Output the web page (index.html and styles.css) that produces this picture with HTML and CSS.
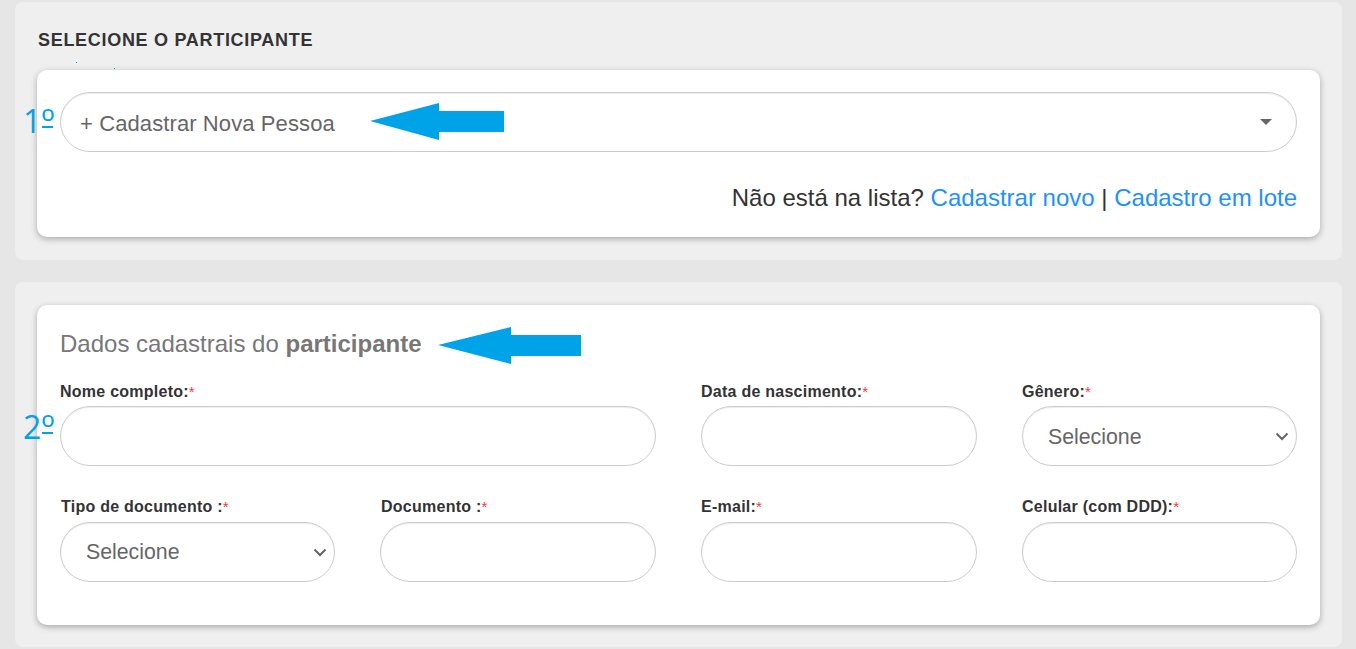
FILE: index.html
```html
<!DOCTYPE html>
<html lang="pt-BR">
<head>
<meta charset="utf-8">
<title>Participante</title>
<link rel="stylesheet" href="styles.css">
</head>
<body>
<main class="page">
  <section class="panel panel-select">
    <h2 class="panel-title">SELECIONE O PARTICIPANTE</h2>
    <div class="card card-select">
      <div class="combo">
        <span class="combo-text">+ Cadastrar Nova Pessoa</span>
        <span class="combo-caret"></span>
      </div>
      <p class="links">Não está na lista? <a href="#">Cadastrar novo</a> | <a href="#">Cadastro em lote</a></p>
    </div>
  </section>

  <section class="panel panel-form">
    <div class="card card-form">
      <h3 class="form-title">Dados cadastrais do <strong>participante</strong></h3>
      <form class="grid">
        <div class="field span2"><label>Nome completo:<em>*</em></label><input type="text"></div>
        <div class="field"><label>Data de nascimento:<em>*</em></label><input type="text"></div>
        <div class="field"><label>Gênero:<em>*</em></label><select class="low-text"><option>Selecione</option></select></div>
        <div class="field lower inset"><label>Tipo de documento :<em>*</em></label><select><option>Selecione</option></select></div>
        <div class="field lower inset"><label>Documento :<em>*</em></label><input type="text"></div>
        <div class="field lower"><label>E-mail:<em>*</em></label><input type="text"></div>
        <div class="field lower"><label>Celular (com DDD):<em>*</em></label><input type="text"></div>
      </form>
    </div>
  </section>
</main>

<span class="step step-1">1<span class="ord">º</span></span>
<span class="step step-2">2<span class="ord">º</span></span>
<span class="speck speck-1"></span>
<span class="speck speck-2"></span>
<svg class="arrow arrow-1" width="136" height="40" viewBox="0 0 136 40"><path d="M1 19 L70 1 L70 9 L135 9 L135 30 L70 30 L70 38 Z"/></svg>
<svg class="arrow arrow-2" width="146" height="40" viewBox="0 0 146 40"><path d="M1 19 L74 1 L74 9 L144 9 L144 30 L74 30 L74 38 Z"/></svg>
</body>
</html>
```
FILE: styles.css
```css
* { box-sizing: border-box; }
html, body { margin: 0; height: 649px; overflow: hidden; }
body {
  background: #e6e6e6;
  font-family: "Liberation Sans", Arial, sans-serif;
  color: #333;
  position: relative;
}
.page {
  display: flex;
  flex-direction: column;
  gap: 22px;
  padding: 2px 14px 0 15px;
}
.panel {
  background: #efefef;
  border-radius: 8px;
  padding: 0 22px;
}
.panel-select { height: 258px; padding-top: 29px; }
.panel-form { height: 365px; padding-top: 23px; }
.panel-title {
  margin: 0 0 20px 1px;
  font-size: 18px;
  line-height: 19px;
  font-weight: 700;
  letter-spacing: .7px;
  color: #333;
}
.card {
  background: #fff;
  border-radius: 10px;
  box-shadow: 0 2px 6px rgba(0,0,0,.3);
  padding: 23px;
}
.card-select { height: 167px; padding-top: 22px; }
.card-form { height: 320px; padding-top: 24px; }
.combo {
  height: 60px;
  border: 1px solid #ccc;
  border-radius: 30px;
  box-shadow: inset 0 1px 1px rgba(0,0,0,.075);
  display: flex;
  align-items: center;
  justify-content: space-between;
  padding: 0 24px 0 19px;
  color: #666;
  font-size: 22px;
}
.combo-text { letter-spacing: .1px; padding-top: 3px; }
.combo-caret {
  width: 0; height: 0;
  border-left: 6px solid transparent;
  border-right: 6px solid transparent;
  border-top: 6px solid #666;
}
.links {
  margin: 31px 0 0;
  text-align: right;
  font-size: 24px;
  line-height: 30px;
}
.links a { color: #1e90ff; text-decoration: none; }
.form-title {
  margin: 0 0 24px;
  font-size: 24px;
  line-height: 30px;
  font-weight: 400;
  color: #777;
}
.form-title strong { font-weight: 700; }
.grid {
  display: grid;
  grid-template-columns: 275px 276px 276px 275px;
  column-gap: 45px;
  row-gap: 32px;
}
.span2 { grid-column: span 2; }
.field label {
  display: block;
  height: 19px;
  margin-bottom: 4px;
  font-size: 16px;
  line-height: 17px;
  font-weight: 700;
  letter-spacing: .25px;
  color: #333;
}
.lower label { margin-bottom: 5px; }
.inset label { padding-left: 1px; }
.field em { color: #f33; font-style: normal; font-weight: 400; font-size: 15px; }
.field input, .field select {
  display: block;
  width: 100%;
  height: 60px;
  border: 1px solid #ccc;
  border-radius: 30px;
  background-color: #fff;
  box-shadow: inset 0 1px 1px rgba(0,0,0,.075);
  font-family: "Liberation Sans", Arial, sans-serif;
  font-size: 21.3px;
  color: #666;
  padding: 0 0 0 25px;
  outline: none;
}
.field select {
  appearance: none;
  -webkit-appearance: none;
  background-image: url("data:image/svg+xml,%3Csvg xmlns='http://www.w3.org/2000/svg' width='14' height='9' viewBox='0 0 14 9'%3E%3Cpath d='M1.5 1.5 L7 7 L12.5 1.5' fill='none' stroke='%23666' stroke-width='2'/%3E%3C/svg%3E");
  background-repeat: no-repeat;
  background-position: right 7px center;
}
.field select.low-text { padding-top: 2px; }
.step {
  position: absolute;
  display: flex;
  font-family: "Open Sans", sans-serif;
  font-size: 32px;
  line-height: 40px;
  color: #00a2e8;
}
.ord {
  position: relative;
  display: block;
  font-size: 36px;
  line-height: 40px;
  width: 12px;
  margin-top: 1px;
}
.ord::after {
  content: "";
  position: absolute;
  left: 1px;
  right: 0;
  top: 24px;
  height: 2px;
  background: #00a2e8;
}
.step-1 { left: 23px; top: 101px; }
.step-2 { left: 23px; top: 407px; }
.speck { position: absolute; width: 1px; height: 1px; background: #00a2e8; }
.speck-1 { left: 76px; top: 62px; }
.speck-2 { left: 114px; top: 68px; }
.arrow { position: absolute; }
.arrow path { fill: #00a2e8; }
.arrow-1 { left: 369px; top: 102px; }
.arrow-2 { left: 437px; top: 326px; }
```
